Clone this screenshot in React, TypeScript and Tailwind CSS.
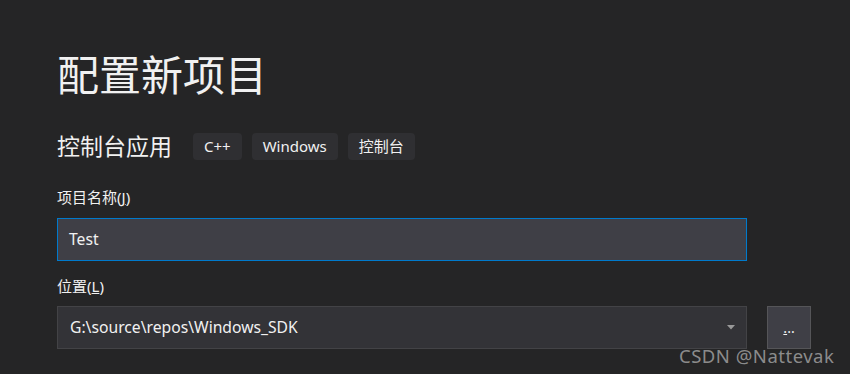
const font = { fontFamily: '"Noto Sans", "Noto Sans CJK SC", sans-serif' };

const Tag = ({ label }: { label: string }) => (
    <span className="h-[27px] px-[11px] flex items-center rounded-[4px] bg-[#2f2f32] text-[15px] text-[#f1f1f1]">
        {label}
    </span>
);

export default function App() {
    return (
        <div
            className="relative w-[850px] h-[374px] overflow-hidden bg-[#252526] text-[#f1f1f1] pl-[57px] pt-[49px]"
            style={font}
        >
            {/* Title */}
            <h1 className="text-[42px] leading-[52px] font-normal">配置新项目</h1>

            {/* Template name + tags */}
            <div className="mt-[32px] flex items-center h-[27px]">
                <h2 className="text-[23px] leading-[27px] mr-[21px]">控制台应用</h2>
                <div className="flex gap-[10px]">
                    <Tag label="C++" />
                    <Tag label="Windows" />
                    <Tag label="控制台" />
                </div>
            </div>

            {/* Project name */}
            <label className="block mt-[27px] text-[15px] leading-[20px]">
                项目名称(<span className="underline">J</span>)
            </label>
            <div className="mt-[11px] w-[690px] h-[43px] flex items-center px-[11px] bg-[#3f3f46] border border-[#007acc] text-[15.7px]">
                Test
            </div>

            {/* Location */}
            <label className="block mt-[15px] text-[15px] leading-[20px]">
                位置(<span className="underline">L</span>)
            </label>
            <div className="mt-[10px] flex items-center gap-[20px]">
                <div className="w-[690px] h-[43px] flex items-center justify-between px-[12px] bg-[#333337] border border-[#434346] text-[15.7px]">
                    <span>G:\source\repos\Windows_SDK</span>
                    <svg width="8" height="5" viewBox="0 0 8 5" className="mr-[-1px]">
                        <path d="M0 0h8L4 4.5z" fill="#999999" />
                    </svg>
                </div>
                <button className="w-[44px] h-[43px] flex items-center justify-center bg-[#3f3f46] border border-[#555558] text-[14px] text-[#f1f1f1]">
                    <span className="underline">.</span>..
                </button>
            </div>

            {/* Watermark */}
            <div className="absolute left-[679px] top-[342px] text-[18.5px] text-[#a8a8a8]/80 tracking-[0.5px]">
                CSDN @Nattevak
            </div>
        </div>
    );
}
